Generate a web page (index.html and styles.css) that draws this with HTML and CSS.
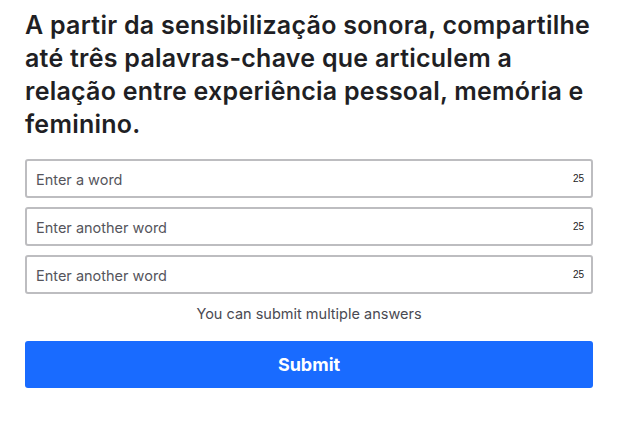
FILE: index.html
```html
<!DOCTYPE html>
<html lang="pt">
<head>
  <meta charset="UTF-8" />
  <title>Wordcloud</title>
  <link rel="stylesheet" href="styles.css">
</head>
<body>
  <main class="question">
    <h1 class="heading">A partir da sensibilização sonora, compartilhe até três palavras-chave que articulem a relação entre experiência pessoal, memória e feminino.</h1>
    <form class="answers">
      <label class="field">
        <input type="text" placeholder="Enter a word" maxlength="25" />
        <span class="count">25</span>
      </label>
      <label class="field">
        <input type="text" placeholder="Enter another word" maxlength="25" />
        <span class="count">25</span>
      </label>
      <label class="field">
        <input type="text" placeholder="Enter another word" maxlength="25" />
        <span class="count">25</span>
      </label>
      <p class="hint">You can submit multiple answers</p>
      <button type="submit">Submit</button>
    </form>
  </main>
</body>
</html>
```

FILE: styles.css
```css
body {
  margin: 0;
  background: #fff;
  font-family: Inter, "Open Sans", sans-serif;
  color: #222;
}
.question {
  width: 568px;
  padding: 9px 0 0 25px;
}
.heading {
  margin: 0 -4px 18px 0;
  font-size: 25px;
  line-height: 33px;
  font-weight: 600;
  letter-spacing: 0.25px;
  color: #1f1f24;
}
.answers {
  display: flex;
  flex-direction: column;
}
.field {
  position: relative;
  display: block;
  margin-bottom: 9px;
}
.field input {
  display: block;
  box-sizing: border-box;
  width: 100%;
  height: 39px;
  padding: 1px 40px 0 9px;
  border: 2px solid #bdbdc0;
  border-radius: 3px;
  font-family: inherit;
  font-size: 14.5px;
  color: #222;
  outline: none;
}
.field input::placeholder {
  color: #55555c;
}
.count {
  position: absolute;
  right: 9px;
  top: 14px;
  font-size: 10px;
  font-family: "Liberation Sans", sans-serif;
  color: #222;
}
.hint {
  margin: 2px 0 19px;
  text-align: center;
  font-size: 14.5px;
  color: #4a4a52;
}
button {
  height: 47px;
  border: none;
  border-radius: 3px;
  background: #196bff;
  color: #fff;
  font-family: inherit;
  font-size: 18px;
  font-weight: 700;
  cursor: pointer;
}
```
